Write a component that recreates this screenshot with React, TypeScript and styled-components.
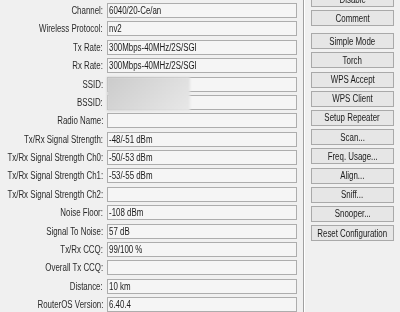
import React from "react";
import styled, { createGlobalStyle } from "styled-components";

const GlobalStyle = createGlobalStyle`
  html, body {
    margin: 0;
    padding: 0;
    background: #f0f0f0;
  }
  body {
    font-family: "Liberation Sans", Arial, sans-serif;
    font-size: 10px;
    color: #1a1a1a;
  }
`;

interface InfoRow {
  label: string;
  value: string;
  hidden?: boolean;
}

const rows: InfoRow[] = [
  { label: "Channel", value: "6040/20-Ce/an" },
  { label: "Wireless Protocol", value: "nv2" },
  { label: "Tx Rate", value: "300Mbps-40MHz/2S/SGI" },
  { label: "Rx Rate", value: "300Mbps-40MHz/2S/SGI" },
  { label: "SSID", value: "", hidden: true },
  { label: "BSSID", value: "" },
  { label: "Radio Name", value: "" },
  { label: "Tx/Rx Signal Strength", value: "-48/-51 dBm" },
  { label: "Tx/Rx Signal Strength Ch0", value: "-50/-53 dBm" },
  { label: "Tx/Rx Signal Strength Ch1", value: "-53/-55 dBm" },
  { label: "Tx/Rx Signal Strength Ch2", value: "" },
  { label: "Noise Floor", value: "-108 dBm" },
  { label: "Signal To Noise", value: "57 dB" },
  { label: "Tx/Rx CCQ", value: "99/100 %" },
  { label: "Overall Tx CCQ", value: "" },
  { label: "Distance", value: "10 km" },
  { label: "RouterOS Version", value: "6.40.4" },
];

const topButtons = ["Disable", "Comment"];
const actionButtons = [
  "Simple Mode",
  "Torch",
  "WPS Accept",
  "WPS Client",
  "Setup Repeater",
  "Scan...",
  "Freq. Usage...",
  "Align...",
  "Sniff...",
  "Snooper...",
  "Reset Configuration",
];

const App: React.FC = () => {
  return (
    <>
      <GlobalStyle />
      <Window>
        <InfoGrid>
          {rows.map((r) => (
            <React.Fragment key={r.label}>
              <Label>
                <Text origin="right">{r.label}:</Text>
              </Label>
              <Field>
                {r.value && <Text origin="left">{r.value}</Text>}
                {r.hidden && <Smudge aria-hidden />}
              </Field>
            </React.Fragment>
          ))}
        </InfoGrid>
        <Side>
          <ButtonGroup>
            {topButtons.map((b) => (
              <Button key={b} type="button">
                <Text origin="center">{b}</Text>
              </Button>
            ))}
          </ButtonGroup>
          <ButtonGroup>
            {actionButtons.map((b) => (
              <Button key={b} type="button">
                <Text origin="center">{b}</Text>
              </Button>
            ))}
          </ButtonGroup>
        </Side>
      </Window>
    </>
  );
};

export default App;

// Styles
const Window = styled.div`
  width: 400px;
  height: 312px;
  overflow: hidden;
  display: flex;
  background: #f0f0f0;
`;

// the original UI font is much narrower than Arial, so squeeze it
const Text = styled.span<{ origin: "left" | "right" | "center" }>`
  display: inline-block;
  flex-shrink: 0;
  white-space: nowrap;
  transform: scaleX(0.79);
  transform-origin: ${({ origin }) => origin} center;
`;

const InfoGrid = styled.div`
  display: grid;
  grid-template-columns: 103px 190px;
  grid-auto-rows: 15px;
  row-gap: 3.375px;
  column-gap: 4px;
  padding: 3px 0 0 0;
  width: 303px;
  box-sizing: border-box;
  align-content: start;
`;

const Label = styled.div`
  display: flex;
  justify-content: flex-end;
  align-items: center;
  line-height: 15px;
  color: #2a2a2a;
`;

const Field = styled.div`
  position: relative;
  box-sizing: border-box;
  height: 15px;
  border: 1px solid #adadad;
  background: #f5f5f5;
  padding: 0 1px;
  line-height: 13px;
  color: #1a1a1a;
`;

// blurred-out SSID/BSSID values
const Smudge = styled.div`
  position: absolute;
  z-index: 2;
  left: -1px;
  top: -1px;
  width: 83px;
  height: 34px;
  background: linear-gradient(135deg, #cbcbcb 0%, #d8d8d8 45%, #e8e8e8 100%);
  filter: blur(1.2px);
`;

const Side = styled.div`
  flex: 1;
  display: flex;
  flex-direction: column;
  gap: 7px;
  margin-top: -9px;
  padding: 0 5px 0 7px;
  border-left: 1px solid #a0a0a0;
  box-shadow: inset 1px 0 0 #ffffff;
`;

const ButtonGroup = styled.div`
  display: flex;
  flex-direction: column;
  gap: 3.2px;
`;

const Button = styled.button`
  all: unset;
  box-sizing: border-box;
  display: flex;
  justify-content: center;
  align-items: center;
  height: 16px;
  width: 83px;
  border: 1px solid #a9a9a9;
  background: #e6e6e6;
  font-family: "Liberation Sans", Arial, sans-serif;
  font-size: 10px;
  color: #1a1a1a;
`;
